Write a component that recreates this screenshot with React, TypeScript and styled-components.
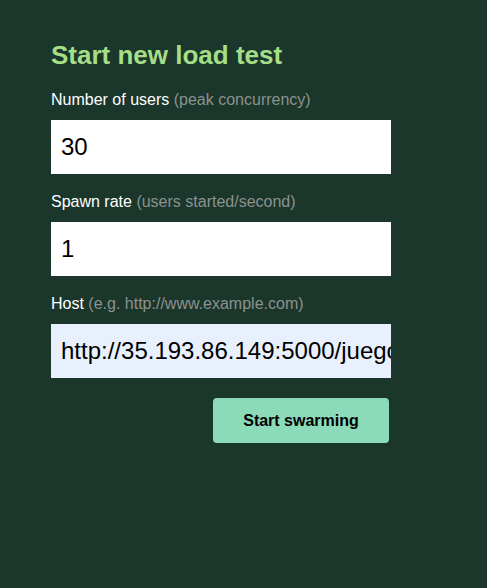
import React from "react";
import styled, { createGlobalStyle } from "styled-components";

const Global = createGlobalStyle`
  html, body { margin: 0; padding: 0; background: #1b362b; }
  body { font-family: "Liberation Sans", Arial, sans-serif; }
`;

const Page = styled.div`
  min-height: 588px;
  background: #1b362b;
  padding: 40px 0 0 51px;
  box-sizing: border-box;
`;

const Form = styled.form`
  width: 340px;
  display: flex;
  flex-direction: column;
`;

const Title = styled.h2`
  margin: 0 0 20px 0;
  font-size: 26px;
  line-height: 30px;
  font-weight: bold;
  color: #a5de86;
`;

const Field = styled.div`
  display: flex;
  flex-direction: column;
  gap: 10px;
  margin-bottom: 18px;
`;

const Label = styled.label`
  font-size: 16px;
  line-height: 20px;
  color: #ffffff;
`;

const Hint = styled.span`
  color: #8c928f;
`;

const Input = styled.input<{ $autofill?: boolean }>`
  box-sizing: border-box;
  width: 340px;
  height: 54px;
  border: none;
  outline: none;
  padding: 0 0 0 10px;
  margin: 0;
  font-family: "Liberation Sans", Arial, sans-serif;
  font-size: 24px;
  color: #000;
  background: ${(p) => (p.$autofill ? "#e8f0fe" : "#ffffff")};
`;

const Actions = styled.div`
  display: flex;
  justify-content: flex-end;
  padding-right: 2px;
  margin-top: 2px;
`;

const Button = styled.button`
  width: 176px;
  height: 45px;
  border: none;
  border-radius: 4px;
  background: #8bdab9;
  color: #000;
  font-family: "Liberation Sans", Arial, sans-serif;
  font-size: 16px;
  font-weight: bold;
  cursor: pointer;
`;

export default function App() {
  return (
    <>
      <Global />
      <Page>
        <Form onSubmit={(e) => e.preventDefault()}>
          <Title>Start new load test</Title>
          <Field>
            <Label>
              Number of users <Hint>(peak concurrency)</Hint>
            </Label>
            <Input defaultValue="30" />
          </Field>
          <Field>
            <Label>
              Spawn rate <Hint>(users started/second)</Hint>
            </Label>
            <Input defaultValue="1" />
          </Field>
          <Field>
            <Label>
              Host <Hint>(e.g. http://www.example.com)</Hint>
            </Label>
            <Input $autofill defaultValue="http://35.193.86.149:5000/juegos" />
          </Field>
          <Actions>
            <Button type="submit">Start swarming</Button>
          </Actions>
        </Form>
      </Page>
    </>
  );
}
